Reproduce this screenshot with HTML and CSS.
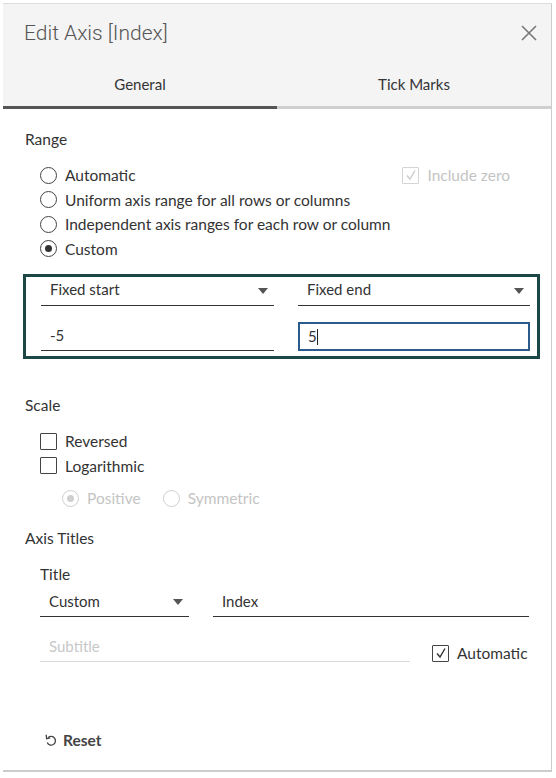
FILE: index.html
```html
<!DOCTYPE html>
<html lang="en">
<head>
    <meta charset="UTF-8">
    <title>Edit Axis</title>
    <link rel="stylesheet" href="styles.css">
</head>
<body>
    <div class="dialog">
        <div class="header">
            <div class="title-row">
                <span class="title">Edit Axis [Index]</span>
                <svg class="close" width="16" height="16" viewBox="0 0 16 16"><path d="M1 1 L15 15 M15 1 L1 15" stroke="#777" stroke-width="1.6" fill="none"/></svg>
            </div>
            <div class="tabs">
                <div class="tab active">General</div>
                <div class="tab">Tick Marks</div>
            </div>
        </div>

        <div class="body">
            <div class="section-label">Range</div>
            <div class="range-options">
                <div class="option-row">
                    <label class="opt"><span class="radio"></span>Automatic</label>
                    <label class="opt disabled"><span class="check"><svg width="12" height="12" viewBox="0 0 12 12"><path d="M2 6.5 L5 10 L10 1.5" stroke="#ccc" stroke-width="1.4" fill="none"/></svg></span>Include zero</label>
                </div>
                <label class="opt"><span class="radio"></span>Uniform axis range for all rows or columns</label>
                <label class="opt"><span class="radio"></span>Independent axis ranges for each row or column</label>
                <label class="opt"><span class="radio on"></span>Custom</label>
            </div>

            <div class="range-box">
                <div class="field select">Fixed start<span class="caret"></span></div>
                <div class="field select">Fixed end<span class="caret"></span></div>
                <div class="field">-5</div>
                <div class="field focused">5<span class="cursor"></span></div>
            </div>

            <div class="section-label scale-label">Scale</div>
            <div class="scale-options">
                <label class="opt"><span class="check"></span>Reversed</label>
                <label class="opt"><span class="check"></span>Logarithmic</label>
                <div class="sub-options">
                    <label class="opt disabled"><span class="radio on"></span>Positive</label>
                    <label class="opt disabled"><span class="radio"></span>Symmetric</label>
                </div>
            </div>

            <div class="section-label titles-label">Axis Titles</div>
            <div class="titles">
                <div class="sub-label">Title</div>
                <div class="title-fields">
                    <div class="field select custom">Custom<span class="caret"></span></div>
                    <div class="field index">Index</div>
                </div>
                <div class="subtitle-row">
                    <div class="field subtitle">Subtitle</div>
                    <label class="opt auto"><span class="check dark"><svg width="12" height="12" viewBox="0 0 12 12"><path d="M2 6.5 L5 10 L10 1.5" stroke="#333" stroke-width="1.4" fill="none"/></svg></span>Automatic</label>
                </div>
            </div>

            <div class="reset">
                <svg width="12" height="14" viewBox="0 0 12 14"><path d="M3.2 4.6 A4.3 4.3 0 1 1 2.2 9.5" stroke="#444" stroke-width="1.3" fill="none"/><path d="M1.2 1.8 L1.6 5.6 L5.2 4.8" stroke="#444" stroke-width="1.3" fill="none"/></svg>
                Reset
            </div>
        </div>
    </div>
</body>
</html>
```

FILE: styles.css
```css
body {
    margin: 0;
    padding: 0;
    background-color: #ffffff;
    font-family: Lato, "Liberation Sans", sans-serif;
    color: #333;
}
.dialog {
    margin: 3px 0 0 3px;
    width: 548px;
    height: 766px;
    border-top: 1px solid #ddd;
    border-right: 1px solid #ccc;
    border-bottom: 2px solid #ccc;
    background-color: #fff;
}
.header {
    background-color: #f4f4f4;
}
.title-row {
    display: flex;
    justify-content: space-between;
    align-items: center;
    height: 57px;
    padding: 0 14px 0 21px;
}
.title {
    font-family: Roboto, sans-serif;
    font-weight: 300;
    font-size: 21px;
    color: #555;
}
.tabs {
    display: flex;
}
.tab {
    flex: 1;
    text-align: center;
    font-size: 15px;
    color: #333;
    height: 45px;
    line-height: 46px;
    border-bottom: 3px solid #cfcfcf;
}
.tab.active {
    border-bottom-color: #555;
}
.body {
    padding: 20px 0 0 22px;
    font-size: 15.5px;
}
.section-label {
    height: 20px;
    line-height: 20px;
}
.range-options {
    padding: 14px 0 0 15px;
}
.option-row {
    display: flex;
    justify-content: space-between;
    width: 470px;
}
.opt {
    display: flex;
    align-items: center;
    height: 24.5px;
}
.opt.disabled {
    color: #c4c4c4;
}
.radio {
    width: 15px;
    height: 15px;
    border: 1px solid #444;
    border-radius: 50%;
    margin-right: 8px;
    display: flex;
    align-items: center;
    justify-content: center;
}
.radio.on::after {
    content: "";
    width: 7px;
    height: 7px;
    border-radius: 50%;
    background-color: #333;
}
.disabled .radio {
    border-color: #cfcfcf;
}
.disabled .radio.on::after {
    background-color: #cfcfcf;
}
.check {
    width: 15px;
    height: 15px;
    border: 1px solid #444;
    border-radius: 1px;
    margin-right: 8px;
    display: flex;
    align-items: center;
    justify-content: center;
}
.disabled .check {
    border-color: #d4d4d4;
}
.range-box {
    margin: 13px 0 0 -2px;
    width: 484px;
    border: 3px solid #1c4745;
    padding: 0 12px 5px 15px;
    display: grid;
    grid-template-columns: 233px 232px;
    column-gap: 24px;
    row-gap: 16px;
}
.field {
    position: relative;
    height: 28px;
    line-height: 27px;
    border-bottom: 1px solid #333;
    padding-left: 9px;
    font-size: 15px;
}
.range-box .select {
    line-height: 24px;
}
.caret {
    position: absolute;
    right: 6px;
    top: 11px;
    border-left: 5px solid transparent;
    border-right: 5px solid transparent;
    border-top: 6px solid #555;
}
.focused {
    border: 2px solid #2a5b8c;
    height: 25px;
    line-height: 25px;
    padding-left: 8px;
}
.cursor {
    display: inline-block;
    width: 1px;
    height: 16px;
    background-color: #222;
    vertical-align: -3px;
}
.scale-label {
    margin-top: 36px;
}
.scale-options {
    padding: 14px 0 0 15px;
}
.sub-options {
    display: flex;
    gap: 22px;
    padding: 8px 0 0 22px;
}
.titles-label {
    margin-top: 17px;
}
.titles {
    padding: 16px 0 0 15px;
}
.sub-label {
    height: 20px;
    line-height: 20px;
}
.title-fields {
    display: flex;
    gap: 24px;
    margin-top: 4px;
}
.title-fields .field {
    height: 28px;
}
.custom {
    width: 140px;
}
.index {
    width: 307px;
}
.subtitle-row {
    display: flex;
    align-items: flex-end;
    margin-top: 16px;
}
.subtitle {
    width: 361px;
    color: #c8c8c8;
    border-bottom-color: #d8d8d8;
}
.auto {
    margin-left: 22px;
    margin-bottom: -4px;
}
.reset {
    display: flex;
    align-items: center;
    gap: 6px;
    margin: 69px 0 0 20px;
    font-weight: bold;
    color: #444;
}
```
